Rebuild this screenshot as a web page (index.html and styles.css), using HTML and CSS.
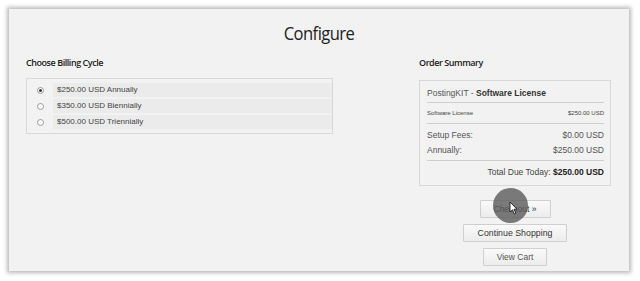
FILE: index.html
```html
<!DOCTYPE html>
<html>
<head>
<meta charset="utf-8">
<link rel="stylesheet" href="styles.css">
</head>
<body>
<div class="card">
  <h1 class="title">Configure</h1>
  <div class="cols">
    <div class="left">
      <h2 class="sub">Choose Billing Cycle</h2>
      <div class="billing">
        <div class="brow"><span class="radio checked"></span><span class="btext">$250.00 USD Annually</span></div>
        <div class="brow"><span class="radio"></span><span class="btext">$350.00 USD Biennially</span></div>
        <div class="brow"><span class="radio"></span><span class="btext">$500.00 USD Triennially</span></div>
      </div>
    </div>
    <div class="right">
      <h2 class="sub">Order Summary</h2>
      <div class="summary">
        <div class="prod">PostingKIT - <b>Software License</b></div>
        <div class="line small"><span>Software License</span><span>$250.00 USD</span></div>
        <div class="fees">
          <div class="line"><span>Setup Fees:</span><span>$0.00 USD</span></div>
          <div class="line"><span>Annually:</span><span>$250.00 USD</span></div>
        </div>
        <div class="total">Total Due Today: <b>$250.00 USD</b></div>
      </div>
      <div class="buttons">
        <div class="btnwrap">
          <button class="btn checkout">Checkout &raquo;</button>
          <span class="clickmark"></span>
          <svg class="cursor" width="9" height="14" viewBox="0 0 9 14"><path d="M1 1 L1 11 L3.5 8.8 L5.3 13 L6.8 12.3 L5 8.2 L8 8.2 Z" fill="#fff" stroke="#222" stroke-width="0.9" stroke-linejoin="round"/></svg>
        </div>
        <button class="btn continue">Continue Shopping</button>
        <button class="btn cart">View Cart</button>
      </div>
    </div>
  </div>
</div>
</body>
</html>
```
FILE: styles.css
```css
html, body { margin: 0; padding: 0; background: #fff; }
body { width: 640px; height: 281px; overflow: hidden; font-family: "Liberation Sans", Arial, sans-serif; color: #333; }
.card {
  margin: 9px 0 0 9px;
  width: 620px;
  height: 262px;
  background: #f2f2f2;
  box-shadow: 0 0 4px 2px rgba(0,0,0,0.28);
  box-sizing: border-box;
  padding: 0 17px 0 17px;
}
.title {
  margin: 0;
  padding-top: 12px;
  height: 24px;
  text-align: center;
  font-family: "Open Sans", sans-serif;
  font-weight: 400;
  font-size: 18px;
  line-height: 24px;
  letter-spacing: -0.6px;
  color: #222;
  transform: scaleX(0.92);
}
.cols { display: flex; justify-content: space-between; margin-top: 11px; }
.left { width: 307px; }
.right { width: 192px; margin-right: 1px; }
.sub {
  margin: 0;
  font-family: "Open Sans", sans-serif;
  font-weight: 600;
  font-size: 9px;
  line-height: 14px;
  letter-spacing: -0.45px;
  color: #222;
}
.billing {
  margin-top: 8px;
  border: 1px solid #d8d8d8;
  padding: 3px 0 3px 0;
}
.brow { display: flex; align-items: center; height: 16px; }
.radio {
  width: 5px; height: 5px;
  border: 1px solid #999;
  border-radius: 50%;
  background: #fff;
  margin-left: 10px;
  margin-right: 9px;
  position: relative;
  flex: none;
}
.radio.checked::after {
  content: ""; position: absolute; left: 1px; top: 1px;
  width: 3px; height: 3px; border-radius: 50%; background: #333;
}
.btext {
  flex: 1;
  height: 14px;
  line-height: 14px;
  background: #ebebeb;
  font-size: 8px;
  color: #444;
  padding-left: 4px;
}
.summary {
  margin-top: 10px;
  border: 1px solid #d8d8d8;
  padding: 0 6px 0 7px;
  font-size: 8px;
  color: #555;
}
.prod { height: 21px; line-height: 25px; border-bottom: 1px solid #cfcfcf; font-size: 8.5px; }
.prod b { color: #333; }
.line { display: flex; justify-content: space-between; }
.line.small { font-size: 6px; height: 20px; line-height: 20px; border-bottom: 1px solid #cfcfcf; color: #444; }
.fees { padding: 4px 0 2px; border-bottom: 1px solid #cfcfcf; }
.fees .line { height: 15px; line-height: 15px; font-size: 8.5px; }
.total { text-align: right; height: 24px; line-height: 23px; font-size: 8.5px; color: #444; }
.total b { color: #222; }
.buttons { display: flex; flex-direction: column; align-items: center; margin-top: 12px; gap: 6px; }
.btnwrap { position: relative; }
.btn {
  font-family: "Liberation Sans", Arial, sans-serif;
  font-size: 8.5px;
  color: #333;
  height: 18px;
  padding: 0 11px;
  background: linear-gradient(#fafafa, #ececec);
  border: 1px solid #cfcfcf;
  border-radius: 1px;
  margin: 0;
}
.btn.checkout { padding: 0 13px; }
.btn.continue { padding: 0 14px; font-size: 8.8px; }
.btn.cart { color: #555; padding: 0 13px; }
.clickmark {
  position: absolute; left: 13px; top: -10px;
  width: 35px; height: 35px; border-radius: 50%;
  background: rgba(90,90,90,0.8);
}
.cursor { position: absolute; left: 29px; top: 3px; }
```
